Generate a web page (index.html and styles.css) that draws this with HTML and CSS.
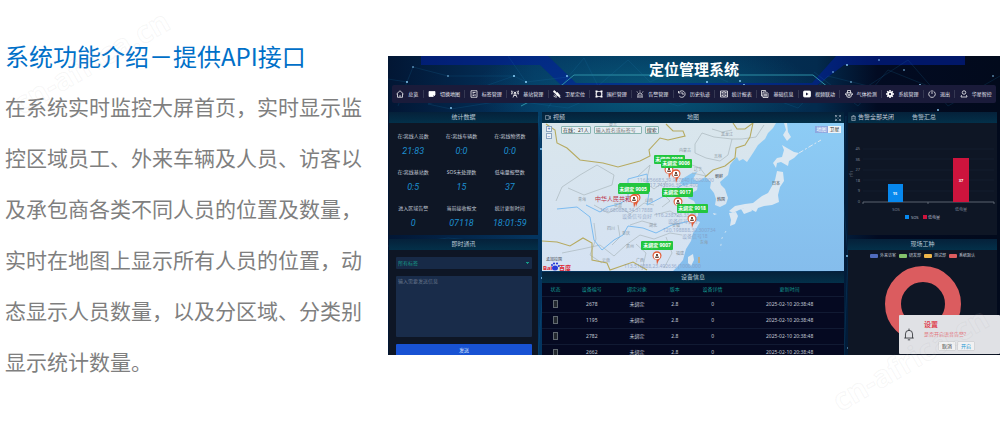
FILE: index.html
```html
<!DOCTYPE html>
<html lang="zh-CN">
<head>
<meta charset="utf-8">
<title>定位管理系统</title>
<link rel="stylesheet" href="styles.css">
</head>
<body>
<main class="page">
  <section class="intro">
    <h1>系统功能介绍－提供API接口</h1>
    <p>在系统实时监控大屏首页，实时显示监控区域员工、外来车辆及人员、访客以及承包商各类不同人员的位置及数量，实时在地图上显示所有人员的位置，动态显示人员数量，以及分区域、分类别显示统计数量。</p>
  </section>

  <section class="screen">
    <svg class="backdrop" viewBox="0 0 612 299" preserveAspectRatio="none" aria-hidden="true">
      <g fill="#02209a" opacity=".6">
        <path d="M33 0H160L188 27H262V30H174L152 9H33Z"/>
        <path d="M577 0H448L424 27H350V30H428L456 9H577Z"/>
        <path d="M262 27H350V30H262Z"/>
      </g>
      <path d="M133 50L174 29L186 19H425L446 36" fill="none" stroke="#2d8fa5" stroke-width="1"/>
      <g stroke="#1d7fae" stroke-width=".4" opacity=".45" fill="none">
        <path d="M0 23L19 26L25 11L60 20L126 20L138 26L180 21L196 2L210 30L240 4L262 26L300 8L340 26M126 20L80 36L40 48L63 53L120 44L180 52L230 30L290 50L350 30L410 52L440 20L480 30L520 4L560 50L612 20M19 26L10 50M138 26L120 0M180 21L160 52M426 16L470 50L500 14L540 30M150 60L155 110L152 160L156 220L150 299M458 60L455 140L460 200L456 299M0 190L60 182L150 190"/>
      </g>
      <g fill="#8fd4ff">
        <circle cx="25" cy="11" r=".8"/><circle cx="19" cy="26" r=".9"/><circle cx="60" cy="20" r=".8"/><circle cx="126" cy="20" r="1"/><circle cx="138" cy="26" r="1"/><circle cx="179" cy="20" r=".9"/><circle cx="79" cy="36" r="1.3" fill="#1c9fa6"/><circle cx="63" cy="52" r=".9"/><circle cx="319" cy="26" r="1"/><circle cx="352" cy="25" r=".9"/><circle cx="356" cy="29" r=".9"/><circle cx="459" cy="9" r=".9"/><circle cx="445" cy="16" r=".8"/><circle cx="491" cy="4" r=".8"/><circle cx="516" cy="14" r=".8"/><circle cx="463" cy="26" r=".8"/><circle cx="605" cy="20" r=".8"/><circle cx="532" cy="29" r=".9"/><circle cx="550" cy="54" r=".9"/><circle cx="153" cy="93" r="1"/><circle cx="154" cy="222" r=".9"/><circle cx="459" cy="200" r=".9"/><circle cx="460" cy="292" r=".8"/>
      </g>
    </svg>

    <header class="title"><h2>定位管理系统</h2></header>

    <nav class="menu">
      <a href="#"><svg viewBox="0 0 16 16"><path d="M1 8L8 1.500L15 8M3 7V14.500H13V7M6 12H10"/></svg>总览</a>
      <a href="#"><svg viewBox="0 0 16 16"><path class="solid" d="M2 3H14V10H10V13H2Z"/><path d="M11 13L14 10"/></svg>切换地图</a>
      <a href="#"><svg viewBox="0 0 16 16"><path d="M2 1.500H14V14.500H2ZM5 5H11M5 8H8M5 11H8M10 8V12"/></svg>标签管理</a>
      <a href="#"><svg viewBox="0 0 16 16"><path d="M4 15L8 5L12 15M5.500 11H10.500M4 2Q2 5 4 8M12 2Q14 5 12 8M1.500 1Q-1 5 1.500 9M14.500 1Q17 5 14.500 9"/><circle class="solid" cx="8" cy="5" r="1"/></svg>基站管理</a>
      <a href="#"><svg viewBox="0 0 16 16"><path class="solid" d="M2 1L6 4L5 7L1 4ZM6 6L9 5L12 9L10 12L6 9ZM10 9L14 11L13 14L10 12Z"/><path d="M1 12Q4 15 8 14M3 9Q4 12 7 12M12 14L15 15"/></svg>卫星定位</a>
      <a href="#"><svg viewBox="0 0 16 16"><path d="M3 3H13V13H3Z"/><path class="solid" d="M1 1H5V5H1ZM11 1H15V5H11ZM1 11H5V15H1ZM11 11H15V15H11Z" stroke="none"/><path d="M0 8H3M13 8H16"/></svg>围栏管理</a>
      <a href="#"><svg viewBox="0 0 16 16"><path d="M4 13V8Q8 3 12 8V13M2 14H14M8 9V12M8 3V1M3 5L2 3M13 5L14 3"/></svg>告警管理</a>
      <a href="#"><svg viewBox="0 0 16 16"><path d="M2 5A6.500 6.500 0 1 1 2.500 12M1 2V6H5M8 4V8H12"/></svg>历史轨迹</a>
      <a href="#"><svg viewBox="0 0 16 16"><path d="M1 2H15V14H1ZM8 2V14M3 5H6M3 8H6M3 11H6M10 5H13M10 8H13M10 11H13"/></svg>统计报表</a>
      <a href="#"><svg viewBox="0 0 16 16"><path d="M4 12H1V1H9V3M4 4H11L14 7V15H4ZM6 8H12M6 10H12M6 12H12"/></svg>基础信息</a>
      <a href="#"><svg viewBox="0 0 16 16"><rect class="solid" x="1" y="2" width="14" height="12" rx="2"/><path d="M6 5L11 8L6 11Z" fill="#1a1b3a" stroke="none"/></svg>视频联动</a>
      <a href="#"><svg viewBox="0 0 16 16"><circle cx="8" cy="10" r="5"/><circle cx="8" cy="10" r="2"/><path d="M5 6V1H11V6M1 10Q1 6 3 5M15 10Q15 6 13 5"/></svg>气体检测</a>
      <a href="#"><svg viewBox="0 0 16 16"><circle cx="8" cy="8" r="4" stroke-width="3.500"/><path stroke-width="3" d="M8 0V3M8 13V16M0 8H3M13 8H16M2.500 2.500L4.500 4.500M11.500 11.500L13.500 13.500M2.500 13.500L4.500 11.500M11.500 4.500L13.500 2.500"/></svg>系统管理</a>
      <a href="#"><svg viewBox="0 0 16 16"><path d="M5 2.500A6.500 6.500 0 1 0 11 2.500M8 0V8"/></svg>退出</a>
      <a href="#"><svg viewBox="0 0 16 16"><circle cx="8" cy="5" r="3.500"/><path d="M4 10Q2 11 2 14H14Q14 11 12 10"/></svg>华星智控</a>
    </nav>

    <div class="columns">
      <div class="column">
        <section class="panel stats">
          <h3>统计数据</h3>
          <dl>
            <div><dt>在:离线人员数</dt><dd>21:83</dd></div>
            <div><dt>在:离线车辆数</dt><dd>0:0</dd></div>
            <div><dt>在:离线物资数</dt><dd>0:0</dd></div>
            <div><dt>在:离线基站数</dt><dd>0:5</dd></div>
            <div><dt>SOS未处理数</dt><dd>15</dd></div>
            <div><dt>低电量报警数</dt><dd>37</dd></div>
            <div><dt>进入区域告警</dt><dd>0</dd></div>
            <div><dt>当前接收报文</dt><dd>07118</dd></div>
            <div><dt>统计更新时间</dt><dd>18:01:59</dd></div>
          </dl>
        </section>
        <section class="panel">
          <h3>即时通讯</h3>
          <form class="message">
            <select aria-label="标签"><option>所有标签</option></select>
            <textarea aria-label="信息" placeholder="输入需要发送信息"></textarea>
            <button type="button">发送</button>
          </form>
        </section>
      </div>

      <div class="column center">
        <section class="panel">
          <header class="map-head">
            <span><svg viewBox="0 0 16 12"><path d="M1 1H11V11H1ZM11 5L15 2V10L11 7"/></svg>视频</span>
            <h3>地图</h3>
            <button type="button" aria-label="全屏"><svg viewBox="0 0 16 16"><path d="M1 6V1H6M10 1H15V6M15 10V15H10M6 15H1V10M1 1L6 6M15 1L10 6M15 15L10 10M1 15L6 10"/></svg></button>
          </header>
          <div class="map">
            <svg class="chart-map" viewBox="0 0 302 148" preserveAspectRatio="xMidYMid slice" role="img" aria-label="地图">
              <defs>
                <linearGradient id="sea" x2="0" y2="1"><stop stop-color="#8dccf5"/><stop offset="1" stop-color="#85bdec"/></linearGradient>
                <linearGradient id="land" x2="0" y2="1"><stop stop-color="#d9e6ec"/><stop offset="1" stop-color="#d5e2f3"/></linearGradient>
                <g id="pin">
                  <path d="M0 8C-1-1 0 4-3 2A4.500 4.500 0 1 1 3 2C1 4 1 5 0 8Z" fill="#e35a34"/>
                  <circle cy="-1" r="3.300" fill="#fff"/>
                  <path d="M-1.800 1V-.5H1.800V1ZM-1-1V-3H1V-1Z" fill="#6e4b3c"/>
                </g>
              </defs>
              <path fill="url(#land)" d="M0 0H302V148H0Z"/>
              <path fill="url(#sea)" d="M234 0L231 5L226 10L223 16L216 22L211 30L205 39L201 36L197 38L195 34L191 38L188 42L186 52L178 59L179 62L183 66L186 75L184 81L178 84L173 82L174 76L172 70L168 65L169 59L163 54L159 57L155 58L151 56L155 49L150 50L145 53L140 56L138 60L142 63L148 61L156 61L155 67L148 71L146 75L152 78L156 86L156 93L151 96L158 99L154 106L151 110L149 118L144 126L141 137L136 143L131 148H302V0Z"/>
              <g fill="#dce8f2">
                <path d="M235 48L241 49L242 58L238 64L236 72L237 79L230 82L222 83L216 85L214 89L210 87L203 85L197 87L191 90L187 88L193 83L203 81L211 80L216 76L220 73L226 70L230 63L233 57Z"/>
                <path d="M187 90L194 89L196 93L193 101L188 103L189 97ZM199 86L208 83L210 88L202 91ZM240 22L245 25L252 29L257 30L252 35L247 38L246 43L239 39L235 40L234 45L231 40L235 35L240 34L242 27ZM242 0H245L246 9L249 14L245 18L241 12L244 7ZM146 134L151 131L152 137L149 143L146 140ZM171 90L175 91L172 92Z"/>
                <path fill="none" stroke="#dce8f2" stroke-width="1" stroke-dasharray="5 2 2 2" d="M257 30L267 24L279 17"/>
                <path fill="none" stroke="#dce8f2" stroke-width=".8" stroke-dasharray="2 5" d="M184 108L180 115L178 128"/>
              </g>
              <g fill="none" stroke="#aab8bd" stroke-width=".7">
                <path d="M14 78L20 64L38 52L55 42L72 52L70 62L56 67L42 72L26 65M52 82L66 90L78 84L88 91L102 80L112 82M20 130L40 126L58 122L72 133L84 122L98 112L112 116L128 110L140 112M60 140L48 132L54 116L52 100M96 53L108 42L104 60L112 66L120 60M112 92L128 88L138 94M88 102L100 98L114 102M100 147L104 130L94 121M122 145L130 130L124 114M153 21L160 10L172 14L190 16L186 32L178 38L164 35L153 30ZM190 16L200 16L214 14L222 2M150 42L158 45L164 53L150 50M70 122L78 114L76 102M120 84L128 78L120 70L124 58M170 6L180 9L190 7"/>
              </g>
              <g fill="none" stroke="#7dbcf0" stroke-width="1">
                <path d="M15 86L35 84L48 94L52 117L60 127L72 117L81 112L86 103L101 105L114 110L130 102L148 98M44 82L58 89L65 84L77 81L86 76L86 56L105 51L107 70L105 82L124 72L142 61"/>
              </g>
              <g fill="none" stroke="#b6aa60" stroke-width="1.100">
                <path d="M4 1L13 7L15 20L25 25L38 37L61 40L76 44L98 38L108 33L107 27L118 15L126 17L143 13L141 8L131 8L124 1M191 0L195 6L203 6L211 0L208 14L203 22L194 25L193 35L183 43L171 47L163 54M0 118L15 119L28 123L41 115L50 120L50 137L65 140L68 147L91 139L105 147"/>
                <path d="M157 134V140" stroke="#e0a04c"/>
              </g>
              <g class="place">
                <text x="67" y="4" fill="#333">蒙古</text><text x="179" y="13">黑龙江</text><text x="172" y="35">吉林</text><text x="137" y="29">内蒙古</text><text x="152" y="48">辽宁</text><text x="36" y="78">青海</text><text x="65" y="107">四川</text><text x="84" y="125">贵州</text><text x="60" y="139">云南</text><text x="94" y="139">广西</text><text x="72" y="84">甘肃</text><text x="103" y="79">山西</text><text x="130" y="104">安徽</text><text x="107" y="104">湖北</text><text x="134" y="132">福建</text><text x="80" y="112">重庆</text><text x="158" y="121">东海</text>
                <g class="country"><text x="173" y="55">朝鲜</text><text x="175" y="78">韩国</text><text x="230" y="62">日本</text><text x="4" y="138">孟加拉国</text></g>
              </g>
              <text class="nation" x="53" y="78">中华人民共和</text>
              <g class="coords">
                <text x="95" y="59">116.356683,39.987840 (1000.000</text><text x="105" y="64">117.745896,39.12.400</text><text x="58" y="89">106.680888,34.317888</text><text x="80" y="95">设备信号良好</text><text x="113" y="94">116.238726,33.98</text><text x="126" y="100">设备信号良好</text><text x="121" y="109">120.198888,30.300734</text><text x="140" y="115">设备信号18</text><text x="82" y="145">113.516888,23.492636 (1000.000</text>
              </g>
              <use href="#pin" x="127" y="48"/><use href="#pin" x="134" y="52"/><use href="#pin" x="94" y="76"/><use href="#pin" x="92" y="77"/><use href="#pin" x="136" y="80"/><use href="#pin" x="150" y="97"/><use href="#pin" x="115" y="134"/>
              <rect class="flag" x="112" y="32" width="31" height="9" rx="1"/>
              <text class="tag" x="127" y="38">未绑定 9008</text>
              <g class="flag">
                <rect x="119" y="36" width="31" height="9" rx="1"/><rect x="77" y="60" width="31" height="9" rx="1"/><rect x="76" y="61" width="31" height="10" rx="1"/><rect x="120" y="65" width="31" height="9" rx="1"/><rect x="135" y="81" width="31" height="9" rx="1"/><rect x="99" y="118" width="32" height="9" rx="1"/>
              </g>
              <g class="tag"><text x="134" y="42">未绑定 9006</text><text x="91" y="68">未绑定 9005</text><text x="135" y="71">未绑定 9017</text><text x="150" y="87">未绑定 9018</text><text x="115" y="124">未绑定 9007</text></g>
              <g class="logo"><text x="1" y="147">Bai</text><text x="17" y="147">百度</text></g>
              <g fill="#293bd8"><ellipse cx="13" cy="145" rx="3" ry="2.500"/><circle cx="10" cy="142" r="1"/><circle cx="12" cy="140.500" r="1.100"/><circle cx="15" cy="140.500" r="1.100"/><circle cx="16.800" cy="143" r="1"/></g>
            </svg>
            <div class="map-tools">
              <div class="zoom"><button type="button">+</button><button type="button">−</button></div>
              <output>在线：21人</output>
              <input type="text" aria-label="搜索" placeholder="输入姓名或标签号">
              <button type="button" class="search">搜索</button>
              <div class="kinds"><button type="button" class="on">地图</button><button type="button">卫星</button></div>
            </div>
          </div>
        </section>
        <section class="panel devices">
          <h3>设备信息</h3>
          <table>
            <colgroup><col class="c1"><col class="c2"><col class="c3"><col class="c4"><col class="c5"><col></colgroup>
            <thead><tr><th>状态</th><th>设备编号</th><th>绑定对象</th><th>版本</th><th>设备详情</th><th>更新时间</th></tr></thead>
            <tbody>
              <tr><td><i class="device"></i></td><td>2678</td><td>未绑定</td><td>2.8</td><td>0</td><td>2025-02-10 20:38:48</td></tr>
              <tr><td><i class="device"></i></td><td>1195</td><td>未绑定</td><td>2.8</td><td>0</td><td>2025-02-10 20:38:48</td></tr>
              <tr><td><i class="device"></i></td><td>2782</td><td>未绑定</td><td>2.8</td><td>0</td><td>2025-02-10 20:38:48</td></tr>
              <tr><td><i class="device"></i></td><td>2662</td><td>未绑定</td><td>2.8</td><td>0</td><td>2025-02-10 20:38:48</td></tr>
            </tbody>
          </table>
        </section>
      </div>

      <div class="column">
        <section class="panel alarms">
          <header class="alarm-head">
            <button type="button"><svg viewBox="0 0 14 16"><path d="M1 4H13M5 4V1H9V4M2 4V15H12V4M5 7V12M9 7V12"/></svg>告警全部关闭</button>
            <h3>告警汇总</h3>
          </header>
          <svg class="bars" viewBox="0 0 149 112" role="img" aria-label="告警汇总">
            <path d="M15 26H146M15 36H146M15 47H146M15 57H146M15 68H146" stroke="#1a2433" stroke-width=".6"/>
            <path d="M15 81V79H146V81M80 79V81" fill="none" stroke="#6e7683" stroke-width=".8"/>
            <rect x="40" y="61" width="15" height="18" fill="#0788ee"/><rect x="105" y="35" width="16" height="44" fill="#cd143d"/>
            <g class="axis"><text x="12" y="27">45</text><text x="12" y="38">36</text><text x="12" y="48">27</text><text x="12" y="59">18</text><text x="12" y="69">9</text><text x="12" y="80">0</text></g>
            <g class="label"><text x="48" y="88">SOS</text><text x="113" y="88">低电量</text><text transform="translate(5 51) rotate(-90)">(个)</text></g>
            <g class="value"><text x="47" y="72">15</text><text x="113" y="59">37</text></g>
            <rect x="57" y="92" width="4" height="4" fill="#0788ee"/><rect x="75" y="92" width="4" height="4" fill="#cd143d"/>
            <g class="key"><text x="63" y="96">SOS</text><text x="80" y="96">低电量</text></g>
          </svg>
        </section>
        <section class="panel jobs">
          <h3>现场工种</h3>
          <ul><li class="visitor">外来访客</li><li class="dev">研发部</li><li class="test">测试部</li><li class="standard">系统默认</li></ul>
          <svg class="ring" viewBox="0 0 80 80" role="img" aria-label="系统默认"><circle cx="40" cy="40" r="30" fill="none" stroke="#db5c5f" stroke-width="16"/></svg>
        </section>
      </div>
    </div>

    <aside class="toast">
      <svg viewBox="0 0 20 22"><path d="M2 17H18M4 17V10A6 6 0 0 1 16 10V17M10 1V4M8 20H12"/></svg>
      <div>
        <h4>设置</h4>
        <p>是否开启语音告警?</p>
        <div class="actions"><button type="button">取消</button><button type="button" class="open">开启</button></div>
      </div>
    </aside>
  </section>
</main>
<span class="watermark first" aria-hidden="true">cn-africa.cn</span>
<span class="watermark second" aria-hidden="true">cn-africa.cn</span>
</body>
</html>
```
FILE: styles.css
```css
* { box-sizing: border-box; }
body {
  margin: 0;
  min-height: 100vh;
  background: #fff;
  font-family: "Noto Sans", "Noto Sans CJK SC", sans-serif;
  position: relative;
}
h1, h2, h3, h4, p, dl, dd, ul { margin: 0; padding: 0; }
button, input, select, textarea { font: inherit; margin: 0; padding: 0; border: 0; border-radius: 0; color: inherit; background: none; }

.page { display: grid; grid-template-columns: 383fr 612fr; padding-left: 5px; align-items: start; }
.intro { padding: 38px 16px 0 0; font-family: "Noto Sans CJK SC", sans-serif; }
.intro h1 { font-size: 24px; line-height: 36px; font-weight: 400; color: #0070c8; white-space: nowrap; }
.intro p { margin-top: 7px; font-size: 21px; line-height: 51px; color: #7f7f7f; }

.screen {
  position: relative;
  margin-top: 56px;
  aspect-ratio: 612 / 299;
  overflow: hidden;
  color: #c3cad6;
  font-size: 5px;
  line-height: 8px;
  background:
    radial-gradient(ellipse 170px 60px at 42% 12%, #07597a, transparent),
    linear-gradient(90deg, #021634, #043560 24%, #032b4e 70%, #020b22 80%, #020a1c);
}
.backdrop { position: absolute; width: 100%; height: 100%; }
.title { position: relative; padding-top: 3px; text-align: center; }
.title h2 { font-size: 15px; line-height: 20px; font-weight: 700; color: #fff; }

.menu {
  position: relative;
  display: flex;
  margin: 6px 4px 0;
  height: 18px;
  border-radius: 2px;
  background: #1a1b3a;
}
.menu a {
  display: flex; flex: 1 1 auto; align-items: center; justify-content: center; gap: 4px;
  margin: 5px 0;
  color: #e7e9f2; text-decoration: none; white-space: nowrap;
  border-right: 1px solid #353852;
}
.menu a:last-child { border: 0; }
svg { display: block; fill: none; }
.menu svg { width: 8px; height: 8px; stroke: #fff; stroke-width: 1.5; }
.menu .solid { fill: #fff; }

.columns {
  position: relative;
  display: grid;
  grid-template-columns: 149fr 302fr 149fr;
  column-gap: 4px;
  padding: 9px 3px 0 1px;
  align-items: start;
}
.column { display: grid; gap: 4px; min-width: 0; }
.column.center { gap: 1px; }
.panel { background: #0e1625; min-width: 0; }
.panel h3, .map-head, .alarm-head {
  height: 11px; font-size: 6px; line-height: 11px; font-weight: 400; text-align: center;
  background: linear-gradient(#05213a, #033049);
}
.panel h3 { color: #b9c8d4; }

.stats dl { display: grid; grid-template-columns: repeat(3, 1fr); padding: 9px 4px 0 0; height: 112px; align-content: start; row-gap: 12px; text-align: center; }
dt { white-space: nowrap; }
dd { margin-top: 6px; line-height: 10px; font-family: Roboto, sans-serif; font-size: 9px; font-style: italic; color: #1d8fd0; }

.message { display: grid; gap: 7px; padding: 7px 6px 0 7px; }
.message select { height: 12px; padding: 0 2px; background: #172a47; color: #169a88; border-radius: 1px; appearance: none;
  background-image: linear-gradient(45deg, transparent 50%, #169a88 50%), linear-gradient(-45deg, transparent 50%, #169a88 50%);
  background-size: 2px 2px; background-repeat: no-repeat; background-position: right 4px center, right 2px center; }
.message textarea { height: 61px; padding: 1px 2px; background: #192c4a; border-radius: 1px; resize: none; line-height: 8px; }
.message textarea::placeholder { color: #66758b; }
.message button { height: 12px; background: #1852d3; color: #dfe8ff; border-radius: 1px; }

.map-head { display: grid; grid-template-columns: 1fr auto 1fr; align-items: center; padding: 0 3px; }
.panel .map-head h3, .panel .alarm-head h3 { background: none; }
.map-head span { display: flex; align-items: center; gap: 2px; }
.map-head span svg { width: 6px; height: 5px; }
.map-head svg, .alarm-head svg { stroke: #c3cad6; stroke-width: 1.5; }
.map-head button { justify-self: end; }
.map-head button svg { width: 6px; height: 6px; }
.map { position: relative; }
.chart-map { width: 100%; height: 148px; }
.place text { font-size: 4px; fill: #8b98a4; }
.place .country text { fill: #3e4650; }
.nation { font-size: 6px; fill: #bd3148; }
.coords { font-size: 5px; fill: #8196bd; opacity: .7; }
.flag { fill: #22c63f; }
.tag { font-size: 5px; font-weight: 700; fill: #fff; text-anchor: middle; }
.logo { font-size: 6px; font-weight: 700; fill: #df2832; }
.map-tools { position: absolute; top: 3px; left: 4px; right: 3px; display: flex; align-items: flex-start; gap: 3px; color: #333; line-height: 7px; }
.zoom { display: grid; gap: 1px; margin-right: 6px; }
.zoom button { width: 6px; height: 6px; line-height: 4px; border: 1px solid #8ca5c0; background: #eef3f8; color: #2457b5; }
.map-tools output, .map-tools input, .search { height: 8px; border: 1px solid #87b4b0; border-radius: 1px; background: #e6eef2; line-height: 6px; padding: 0 1px; white-space: nowrap; }
.map-tools input { width: 48px; }
.map-tools input::placeholder { color: #777; }
.kinds { display: flex; margin-left: auto; }
.kinds button { width: 13px; height: 7px; background: #f0f4f8; color: #333; }
.kinds .on { background: #8ea8df; color: #fff; }

.devices { background: #050921; }
table { width: 100%; table-layout: fixed; border-collapse: collapse; text-align: center; }
.c1 { width: 9%; } .c2 { width: 15%; } .c3 { width: 15%; } .c4 { width: 10%; } .c5 { width: 15%; }
th, td { padding: 0; height: 16px; border-top: 1px solid #111a33; white-space: nowrap; }
th { height: 13px; border: 0; font-weight: 400; color: #139a92; }
.device { display: inline-block; width: 5px; height: 8px; background: #23282e; border: 1px solid #616970; vertical-align: middle; }

.alarm-head { display: grid; grid-template-columns: 1fr auto 1fr; align-items: center; padding-left: 3px; }
.alarm-head button { display: flex; align-items: center; gap: 2px; white-space: nowrap; }
.alarm-head svg { width: 5px; height: 6px; }
.bars { width: 100%; height: 112px; }
.bars text { font-size: 4px; fill: #7a8494; }
.axis { text-anchor: end; }
.label, .value { text-anchor: middle; }
.bars .value text { fill: #fff; font-weight: 700; }
.bars .key text { fill: #aeb6c2; }

.jobs ul { display: flex; justify-content: center; gap: 3px; list-style: none; padding-top: 2px; font-size: 4px; line-height: 8px; }
.jobs li { display: flex; align-items: center; gap: 2px; white-space: nowrap; }
.jobs li::before { content: ""; width: 8px; height: 4px; border-radius: 1px; }
.visitor::before { background: #506bbd; }
.dev::before { background: #82c16c; }
.test::before { background: #edb64a; }
.standard::before { background: #db5c5f; }
.ring { width: 80px; height: 80px; margin: 4px auto 30px; }

.toast { position: absolute; right: 0; bottom: 1px; display: flex; align-items: center; gap: 9px; width: 101px; height: 39px; padding-left: 4px; background: #e0e1e5; border-radius: 1px; }
.toast > svg { width: 12px; height: 13px; stroke: #34373c; stroke-width: 1.5; }
.toast h4 { font-size: 7px; line-height: 11px; color: #df4350; }
.toast p { line-height: 9px; color: #e2767d; }
.actions { display: flex; gap: 3px; padding: 3px 0 0 15px; line-height: 8px; }
.actions button { width: 16px; height: 8px; background: #f1f1f2; color: #333; box-shadow: 0 0 1px #999; }
.actions .open { color: #239bd5; }

.watermark {
  position: absolute; pointer-events: none;
  font: 700 30px/36px "Open Sans", sans-serif;
  color: rgba(255, 255, 255, .06);
  -webkit-text-stroke: 1px rgba(150, 150, 150, .09);
  transform: rotate(-30deg);
}
.first { left: 4px; top: 44px; }
.second { right: 2px; top: 341px; }
```
